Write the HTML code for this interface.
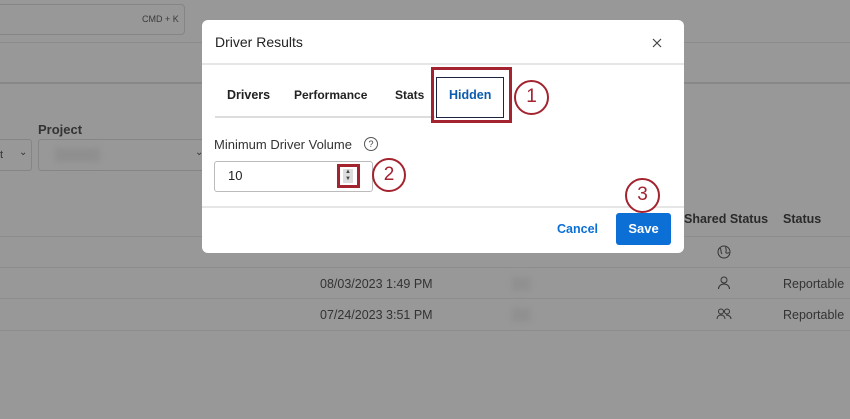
<!DOCTYPE html>
<html><head><style>
*{margin:0;padding:0;box-sizing:border-box}
body{width:850px;height:419px;overflow:hidden;background:#989898;font-family:"Liberation Sans",sans-serif;position:relative;color:#222}
.a{position:absolute}
.t{position:absolute;white-space:nowrap}
</style></head><body>
<div class="a" style="left:-5px;top:4px;width:190px;height:31px;border:1px solid #858585;border-radius:4px"></div>
<div class="t" style="left:142px;top:14px;font-size:9px;color:#3a3a3a">CMD + K</div>
<div class="a" style="left:0;top:42px;width:850px;height:1px;background:#8c8c8c"></div>
<div class="a" style="left:0;top:82px;width:850px;height:2px;background:#888"></div>
<div class="t" style="left:38px;top:122px;font-size:13px;font-weight:bold;color:#333">Project</div>
<div class="a" style="left:-5px;top:139px;width:37px;height:32px;border:1px solid #858585;border-radius:3px"></div>
<div class="t" style="left:0;top:149px;font-size:11px;color:#333">t</div>
<div class="t" style="left:19px;top:147px;font-size:10px;color:#333">&#8964;</div>
<div class="a" style="left:38px;top:139px;width:170px;height:32px;border:1px solid #858585;border-radius:3px"></div>
<div class="a" style="left:55px;top:148px;width:45px;height:14px;background:#8f8f8f;filter:blur(3px)"></div>
<div class="t" style="left:195px;top:147px;font-size:10px;color:#333">&#8964;</div>
<div class="t" style="left:684px;top:212px;font-size:12.5px;font-weight:bold;color:#2a2a2a">Shared Status</div>
<div class="t" style="left:783px;top:212px;font-size:12.5px;font-weight:bold;color:#2a2a2a">Status</div>
<div class="a" style="left:0;top:236px;width:850px;height:1px;background:#8d8d8d"></div>
<div class="a" style="left:0;top:267px;width:850px;height:1px;background:#8d8d8d"></div>
<div class="a" style="left:0;top:298px;width:850px;height:1px;background:#8d8d8d"></div>
<div class="a" style="left:0;top:330px;width:850px;height:1px;background:#8d8d8d"></div>
<div class="t" style="left:320px;top:277px;font-size:12.5px;color:#333">08/03/2023 1:49 PM</div>
<div class="t" style="left:320px;top:308px;font-size:12.5px;color:#333">07/24/2023 3:51 PM</div>
<div class="t" style="left:783px;top:277px;font-size:12.5px;color:#333">Reportable</div>
<div class="t" style="left:783px;top:308px;font-size:12.5px;color:#333">Reportable</div>
<div class="a" style="left:512px;top:277px;width:18px;height:14px;background:#909090;filter:blur(3px)"></div>
<div class="a" style="left:512px;top:308px;width:18px;height:14px;background:#909090;filter:blur(3px)"></div>
<svg class="a" style="left:716px;top:244px" width="16" height="16" viewBox="0 0 16 16" fill="none" stroke="#333" stroke-width="1"><circle cx="8" cy="8" r="6"/><path d="M4 4c2 2 0 4 2 6M10 2.5c-1 2 1 3 0 5s2 2 3 1"/></svg>
<svg class="a" style="left:717px;top:275px" width="14" height="16" viewBox="0 0 14 16" fill="none" stroke="#333" stroke-width="1"><circle cx="7" cy="5" r="3"/><path d="M1.5 14c0-3 2.5-5 5.5-5s5.5 2 5.5 5"/></svg>
<svg class="a" style="left:716px;top:308px" width="18" height="12" viewBox="0 0 18 12" fill="none" stroke="#333" stroke-width="1"><circle cx="5" cy="3.5" r="2.5"/><circle cx="11" cy="3.5" r="2.5"/><path d="M1 11c0-2.5 1.8-4 4-4s4 1.5 4 4M10 7c2.5 0 5 1.5 5 4"/></svg>

<div class="a" style="left:202px;top:20px;width:482px;height:233px;background:#fff;border-radius:6px"></div>
<div class="t" style="left:215px;top:34px;font-size:14px;color:#222">Driver Results</div>
<svg class="a" style="left:652px;top:38px" width="10" height="10" viewBox="0 0 10 10" stroke="#444" stroke-width="1.2"><path d="M1 1L9 9M9 1L1 9"/></svg>
<div class="a" style="left:202px;top:63px;width:482px;height:2px;background:#e6e6e6"></div>
<div class="t" style="left:227px;top:88px;font-size:12.5px;font-weight:bold;color:#222">Drivers</div>
<div class="t" style="left:294px;top:88px;font-size:12px;font-weight:bold;color:#222">Performance</div>
<div class="t" style="left:395px;top:88px;font-size:12px;font-weight:bold;color:#222">Stats</div>
<div class="a" style="left:215px;top:116px;width:220px;height:2px;background:#ddd"></div>
<div class="a" style="left:436px;top:77px;width:68px;height:41px;border:1.5px solid #1c2540"></div>
<div class="t" style="left:449px;top:88px;font-size:12.5px;font-weight:bold;color:#0b5cad">Hidden</div>
<div class="a" style="left:431px;top:67px;width:81px;height:56px;border:3px solid #a3232f"></div>
<div class="a" style="left:514px;top:80px;width:35px;height:35px;border:2.5px solid #a3232f;border-radius:50%;background:#fff;color:#a3232f;font-size:19px;text-align:center;line-height:30px">1</div>
<div class="t" style="left:214px;top:137px;font-size:13px;color:#333">Minimum Driver Volume</div>
<div class="a" style="left:364px;top:137px;width:14px;height:14px;border:1.2px solid #555;border-radius:50%;font-size:9px;text-align:center;line-height:12px;color:#444">?</div>
<div class="a" style="left:214px;top:161px;width:159px;height:31px;border:1px solid #bbb;border-radius:3px"></div>
<div class="t" style="left:228px;top:168px;font-size:13px;color:#222">10</div>
<div class="a" style="left:337px;top:164px;width:23px;height:24px;border:3px solid #a3232f"></div>
<div class="a" style="left:343px;top:169px;width:10px;height:14px;background:#ddd;font-size:6px;line-height:7px;text-align:center;color:#444">▲<br>▼</div>
<div class="a" style="left:372px;top:158px;width:34px;height:34px;border:2.5px solid #a3232f;border-radius:50%;background:#fff;color:#a3232f;font-size:19px;text-align:center;line-height:29px">2</div>
<div class="a" style="left:202px;top:206px;width:482px;height:2px;background:#e6e6e6"></div>
<div class="a" style="left:625px;top:178px;width:35px;height:35px;border:2.5px solid #a3232f;border-radius:50%;background:#fff;color:#a3232f;font-size:19px;text-align:center;line-height:30px">3</div>
<div class="t" style="left:557px;top:222px;font-size:12.5px;font-weight:bold;color:#0b6fd6">Cancel</div>
<div class="a" style="left:616px;top:213px;width:55px;height:32px;background:#0b6fd6;border-radius:3px;color:#fff;font-size:13px;font-weight:bold;text-align:center;line-height:32px">Save</div>
</body></html>
